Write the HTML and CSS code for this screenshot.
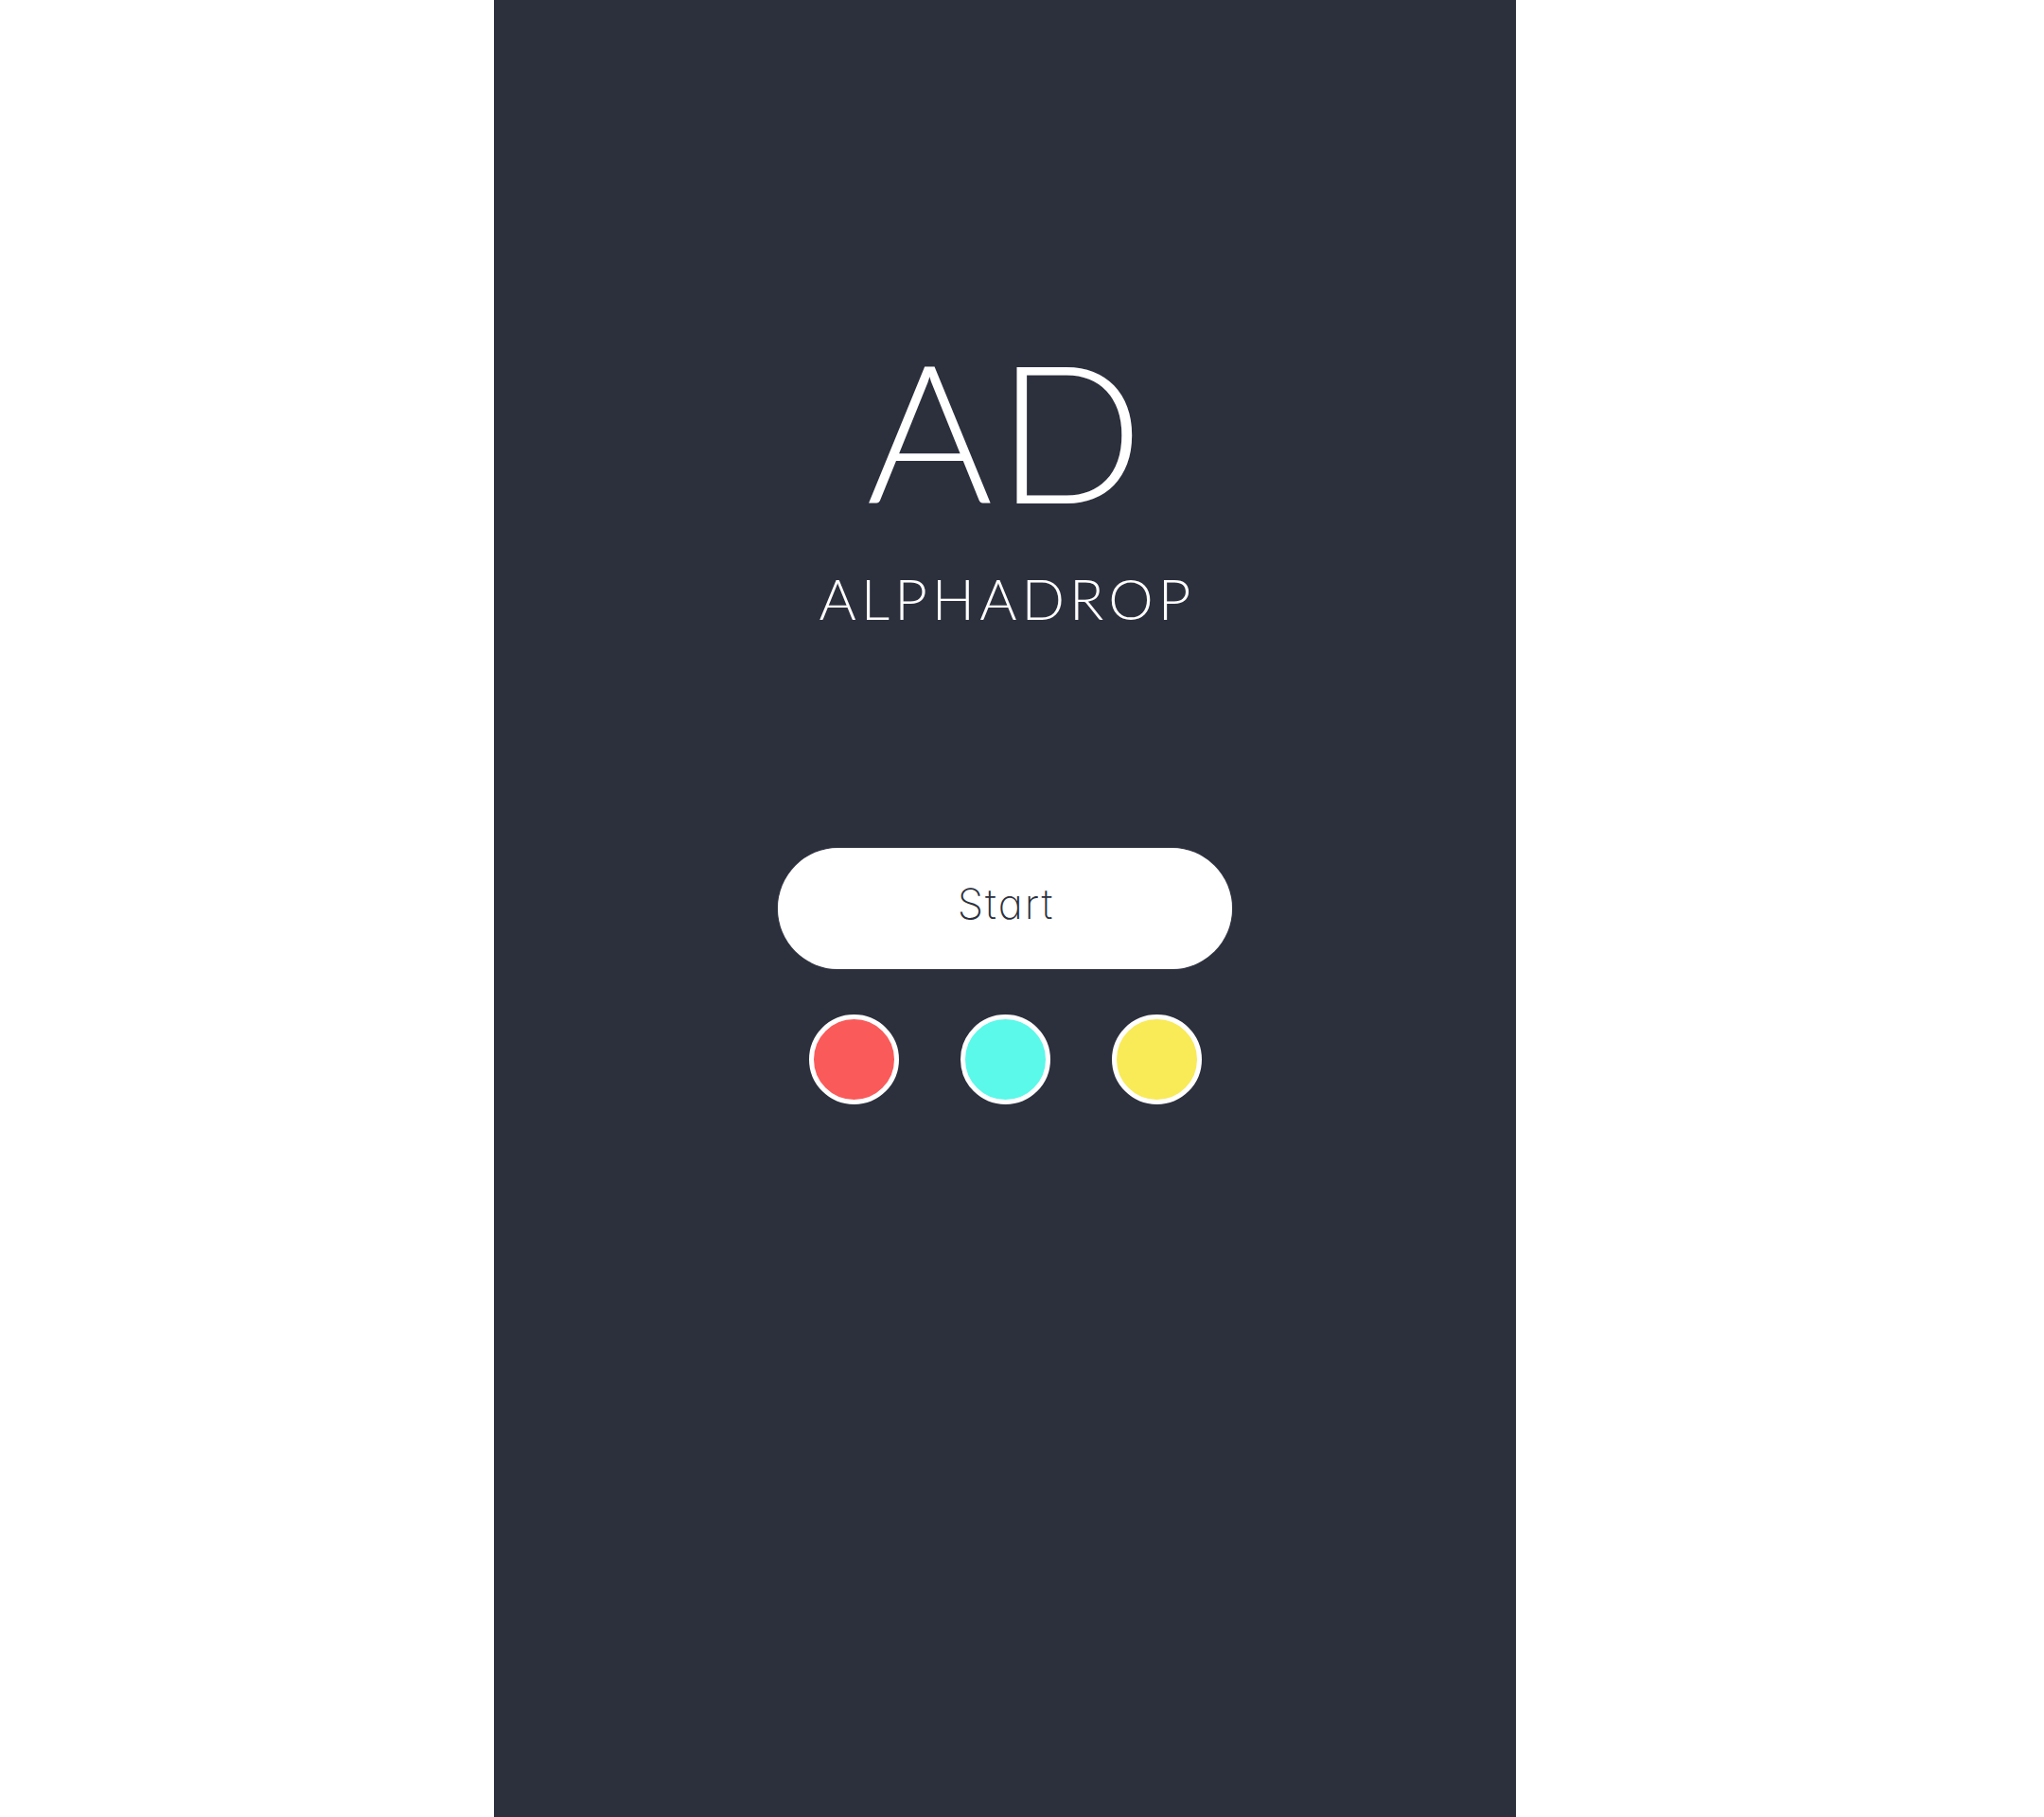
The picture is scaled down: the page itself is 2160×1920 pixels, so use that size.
FILE: index.html
```html
<!DOCTYPE html>
<html lang="en">
<head>
<meta charset="utf-8">
<title>Alphadrop</title>
<link rel="stylesheet" href="styles.css">
</head>
<body>
<main class="screen">
  <h1 class="logo">AD</h1>
  <p class="name">ALPHADROP</p>
  <button class="start">Start</button>
  <div class="colors">
    <span class="dot dot-red"></span>
    <span class="dot dot-cyan"></span>
    <span class="dot dot-yellow"></span>
  </div>
</main>
</body>
</html>
```
FILE: styles.css
```css
html, body {
  margin: 0;
  padding: 0;
  background: #ffffff;
}
body {
  font-family: "Lato", "Inter", sans-serif;
}
.screen {
  width: 1080px;
  height: 1920px;
  margin-left: 522px;
  background: #2c303d;
  display: flex;
  flex-direction: column;
  align-items: center;
  padding-top: 351px;
  box-sizing: border-box;
}
.logo {
  margin: 0;
  font-size: 204px;
  line-height: 1;
  font-weight: 300;
  letter-spacing: 4px;
  padding-left: 4px;
  color: #ffffff;
}
.name {
  margin: 47px 0 0;
  font-size: 60px;
  line-height: 1;
  font-weight: 300;
  letter-spacing: 5px;
  padding-left: 5px;
  color: #ffffff;
}
.start {
  margin-top: 234px;
  width: 480px;
  height: 128px;
  border: none;
  border-radius: 64px;
  background: #ffffff;
  color: #2c303d;
  font-family: "Inter", "Lato", sans-serif;
  font-feature-settings: "cv11";
  font-weight: 200;
  font-size: 44px;
  letter-spacing: 2px;
  display: flex;
  align-items: center;
  justify-content: center;
  padding: 0 0 10px 2px;
  box-sizing: border-box;
  box-shadow: 0 0 1px rgba(255, 255, 255, 0.5);
}
.colors {
  margin-top: 48px;
  display: flex;
  gap: 65px;
}
.dot {
  width: 95px;
  height: 95px;
  border-radius: 50%;
  border: 5px solid #ffffff;
  box-sizing: border-box;
}
.dot-red { background: #fb5a5a; }
.dot-cyan { background: #5af9ea; }
.dot-yellow { background: #f9ea58; }
```
